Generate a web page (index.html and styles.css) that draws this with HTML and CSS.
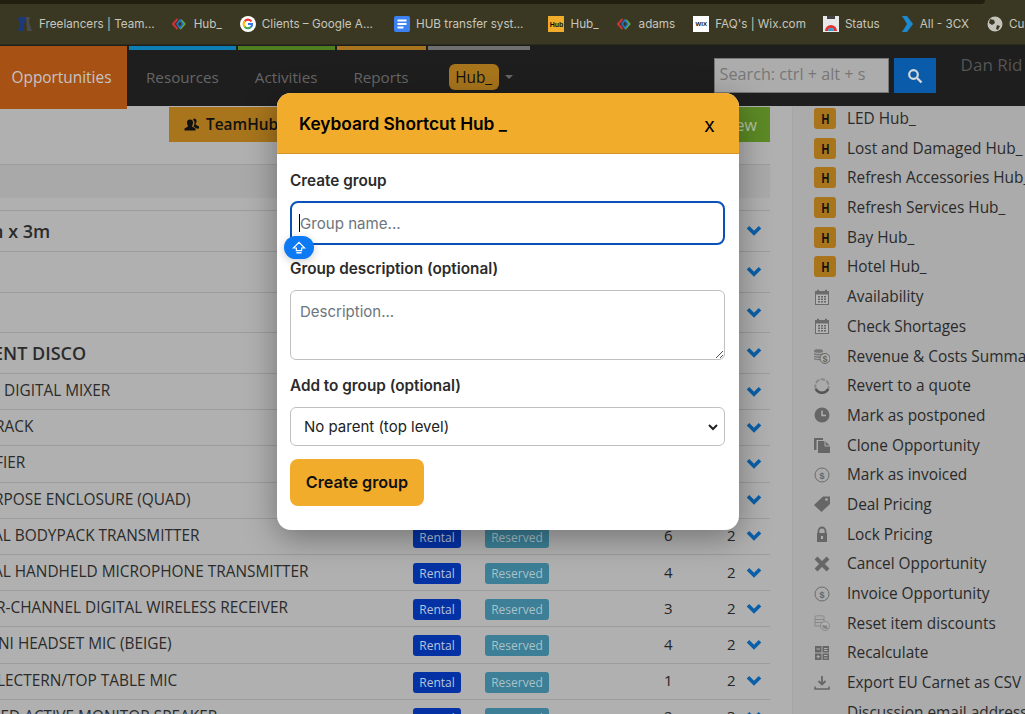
FILE: index.html
```html
<!DOCTYPE html>
<html lang="en">
<head>
<meta charset="utf-8">
<title>Keyboard Shortcut Hub</title>
<link rel="stylesheet" href="styles.css">
</head>
<body>
<svg class="defs" width="0" height="0" aria-hidden="true">
  <symbol id="chev" viewBox="0 0 16 12"><path d="M2 2.200 8 8.200l6-6" fill="none" stroke="currentColor" stroke-width="3.600"/></symbol>
  <symbol id="cal" viewBox="0 0 16 16"><path d="M1 2h2V.8h2V2h6V.8h2V2h2v14H1z" fill="#6b6b6b"/><path d="M2 5.500h12V15H2z" fill="#b4b4b4"/><path d="M4 7h2v1.500H4zM7 7h2v1.500H7zM10 7h2v1.500h-2zM4 9.500h2V11H4zM7 9.500h2V11H7zM10 9.500h2V11h-2zM4 12h2v1.500H4zM7 12h2v1.500H7zM10 12h2v1.500h-2z" fill="#666"/></symbol>
  <symbol id="coins" viewBox="0 0 16 16"><path d="M0 2.500C0 .8 9 .8 9 2.500v8.500C9 12.500 0 12.500 0 11z" fill="#777"/><path d="M0 4.500c2 1.200 7 1.200 9 0M0 7c2 1.200 7 1.200 9 0M0 9.500c2 1.200 7 1.200 9 0" fill="none" stroke="#b0b0b0"/><circle cx="11" cy="10.500" r="5" fill="#b0b0b0" stroke="#666"/><text x="11" y="13.500" class="svgt">$</text></symbol>
  <symbol id="rev" viewBox="0 0 16 16"><circle cx="8" cy="8" r="6.700" fill="none" stroke="#888" stroke-width="2" stroke-dasharray="4.500 1.500"/><path d="M1.800 11a7 7 0 0 0 12.400 0" fill="none" stroke="#555" stroke-width="2.600"/></symbol>
  <symbol id="clock" viewBox="0 0 16 16"><circle cx="8" cy="8" r="7.500" fill="#666"/><path d="M8 3.500V8.500h4" fill="none" stroke="#b0b0b0" stroke-width="1.500"/></symbol>
  <symbol id="clone" viewBox="0 0 16 16"><path d="M0 1h9v2H2.500v10H0z" fill="#666"/><path d="M4 4h7l5 5v7H4z" fill="#666"/><path d="M11 4v5h5" fill="none" stroke="#b0b0b0"/></symbol>
  <symbol id="dollar" viewBox="0 0 16 16"><circle cx="8" cy="8" r="7" fill="none" stroke="#6b6b6b"/><text x="8" y="11.500" class="svgt">$</text></symbol>
  <symbol id="tag" viewBox="0 0 16 16"><path d="M0 9 9 .5h7V8l-8.500 8z" fill="#666"/><circle cx="12.500" cy="3.500" r="1.300" fill="#b0b0b0"/></symbol>
  <symbol id="lock" viewBox="0 0 16 16"><path d="M4.500 7V5a3.500 3.500 0 0 1 7 0v2" fill="none" stroke="#666" stroke-width="1.800"/><path d="M3 7h10v9H3z" fill="#666"/><path d="M7 10h2v3H7z" fill="#b0b0b0"/></symbol>
  <symbol id="cross" viewBox="0 0 16 16"><path d="M2 2l12 12M14 2 2 14" stroke="#666" stroke-width="4"/></symbol>
  <symbol id="disc" viewBox="0 0 16 16"><path d="M1 1.500c0-1 9-1 9 0V11H1z" fill="none" stroke="#888"/><path d="M1 4.500h9M1 7.500h7" stroke="#888"/><circle cx="11" cy="11" r="4.500" fill="#b0b0b0" stroke="#888"/><text x="11" y="13.500" class="svgt small">%</text></symbol>
  <symbol id="calc" viewBox="0 0 16 16"><path d="M1 1h6.500v6.500H1zM8.500 1H15v6.500H8.500zM1 8.500h6.500V15H1zM8.500 8.500H15V15H8.500z" fill="#666"/><path d="M2.500 4h3.500M10 3.500h3.500M10 5.500h3.500M2.500 11.700h3.500M4.200 10v3.500M10 10.500h3.500M10 13h3.500" stroke="#b0b0b0"/></symbol>
  <symbol id="dl" viewBox="0 0 16 16"><path d="M8 1v8M4.500 6 8 9.500 11.500 6" fill="none" stroke="#666" stroke-width="1.800"/><path d="M1 11.500v2.500h14v-2.500" fill="none" stroke="#666" stroke-width="1.500"/></symbol>
</svg>

<header class="bookmarks">
  <div class="topstrip"></div>
  <nav class="bm-row">
    <a class="bm bm-a"><svg class="bm-ic" viewBox="0 0 16 16"><path d="M3 1h7L7 8l-1 7H1l2-7L1 3z" fill="#1c3a7a"/><path d="M9 1h4l-1 5 3 9h-5z" fill="#4a4a4a"/></svg>Freelancers | Team...</a>
    <a class="bm"><svg class="bm-ic" viewBox="0 0 16 16"><path d="M5.500 3 1 8l4.500 5" fill="none" stroke="#c33" stroke-width="2"/><path d="M8 13l4.500-5L9 4" fill="none" stroke="#6a3" stroke-width="2"/><path d="M5 8l3-4 3 4-3 4z" fill="none" stroke="#27c" stroke-width="1.500"/></svg>Hub_</a>
    <a class="bm bm-c"><svg class="bm-ic" viewBox="0 0 16 16"><circle cx="8" cy="8" r="8" fill="#fff"/><path d="M12.300 5A5 5 0 0 0 4 4.500L5.500 6A3 3 0 0 1 10.500 6z" fill="#e33"/><path d="M4 4.500a5 5 0 0 0 0 7L5.500 10a3 3 0 0 1 0-4z" fill="#fb0"/><path d="M4 11.500a5 5 0 0 0 7.500.3L10 10.500A3 3 0 0 1 5.500 10z" fill="#3a5"/><path d="M13 7H8v2h3a3 3 0 0 1-1 1.500l1.500 1.300A5 5 0 0 0 13 7z" fill="#37e"/></svg>Clients – Google A...</a>
    <a class="bm bm-long"><svg class="bm-ic" viewBox="0 0 16 16"><rect width="16" height="16" rx="2" fill="#3b82f0"/><path d="M3.500 3.500h9v2h-9zM3.500 7h9v2h-9zM3.500 10.500h6v2h-6z" fill="#fff"/></svg>HUB transfer syst...</a>
    <a class="bm"><span class="bm-hub">Hub</span>Hub_</a>
    <a class="bm"><svg class="bm-ic" viewBox="0 0 16 16"><path d="M5.500 3 1 8l4.500 5" fill="none" stroke="#c33" stroke-width="2"/><path d="M8 13l4.500-5L9 4" fill="none" stroke="#6a3" stroke-width="2"/><path d="M5 8l3-4 3 4-3 4z" fill="none" stroke="#27c" stroke-width="1.500"/></svg>adams</a>
    <a class="bm bm-a"><span class="bm-wix">WIX</span>FAQ's | Wix.com</a>
    <a class="bm"><svg class="bm-ic" viewBox="0 0 16 16"><rect width="16" height="16" fill="#e8e8e8"/><rect x="4" y="0" width="8" height="3" fill="#444"/><path d="M2 15a6 6 0 0 1 12 0h-3a3 3 0 0 0-6 0z" fill="#d33"/><path d="M5 15a3 3 0 0 1 6 0z" fill="#39c"/></svg>Status</a>
    <a class="bm"><svg class="bm-ic" viewBox="0 0 16 16"><path d="M4 0h5l6 8-6 8H4l5-8z" fill="#1c8ad0"/></svg>All - 3CX</a>
    <a class="bm"><svg class="bm-ic" viewBox="0 0 16 16"><circle cx="8" cy="8" r="7.500" fill="#c4c4bc"/><path d="M3 3l4 1 1 3-3 2-3-2zM10 9l3 1-2 4-2-1z" fill="#3a3823"/></svg>Cu</a>
  </nav>
</header>

<div class="navbar">
  <div class="strips">
    <i class="strip s1"></i><i class="strip s2"></i><i class="strip s3"></i><i class="strip s4"></i>
  </div>
  <a class="tab-active">Opportunities</a>
  <div class="nav-links">
    <a>Resources</a><a>Activities</a><a>Reports</a>
  </div>
  <span class="nav-hub">Hub_</span><span class="nav-caret"></span>
  <div class="search">
    <span class="search-input">Search: ctrl + alt + s</span>
    <span class="search-btn"><svg viewBox="0 0 16 16" width="16" height="16"><circle cx="6.500" cy="6.500" r="4.300" fill="none" stroke="#d8d8d8" stroke-width="2.200"/><path d="m10 10 4.500 4.500" stroke="#d8d8d8" stroke-width="2.400"/></svg></span>
  </div>
  <span class="nav-user">Dan Rid</span>
</div>

<div class="content">
  <main class="left">
    <div class="toolbar">
      <span class="btn-team"><svg viewBox="0 0 16 16" width="16" height="16"><path d="M6 2.500a3 3 0 0 1 3 3c0 2-1 3-1 4l3.500 2v2H.5v-2L4 9.500c0-1-1-1.500-1-4a3 3 0 0 1 3-3z" fill="#111"/><path d="M10 1.500a2.500 2.500 0 0 1 2.500 2.500c0 2-1 3-1 3.500l3.500 2v2h-2.500L9.500 9.500c.5-1 1-2 1-4 0-1-.5-2-1.500-3z" fill="#111"/></svg>TeamHub</span>
      <span class="btn-green">ew</span>
    </div>
    <div class="band"></div>
    <div class="row tall"><span class="name bold clip-b">3m x 3m</span><svg class="chev"><use href="#chev"/></svg></div>
    <div class="row tall"><span class="name"></span><svg class="chev"><use href="#chev"/></svg></div>
    <div class="row tall short"><span class="name"></span><svg class="chev"><use href="#chev"/></svg></div>
    <div class="row tall"><span class="name bold clip-c">ENT DISCO</span><svg class="chev"><use href="#chev"/></svg></div>
    <div class="row"><span class="name lead">DIGITAL MIXER</span><svg class="chev"><use href="#chev"/></svg></div>
    <div class="row"><span class="name i5">RACK</span><svg class="chev"><use href="#chev"/></svg></div>
    <div class="row"><span class="name i5">FIER</span><svg class="chev"><use href="#chev"/></svg></div>
    <div class="row"><span class="name i6">RPOSE ENCLOSURE (QUAD)</span><svg class="chev"><use href="#chev"/></svg></div>
    <div class="row"><span class="name i7">AL BODYPACK TRANSMITTER</span><span class="badge rental">Rental</span><span class="badge reserved">Reserved</span><span class="qty">6</span><span class="qty2">2</span><svg class="chev"><use href="#chev"/></svg></div>
    <div class="row"><span class="name i7">AL HANDHELD MICROPHONE TRANSMITTER</span><span class="badge rental">Rental</span><span class="badge reserved">Reserved</span><span class="qty">4</span><span class="qty2">2</span><svg class="chev"><use href="#chev"/></svg></div>
    <div class="row"><span class="name i4">R-CHANNEL DIGITAL WIRELESS RECEIVER</span><span class="badge rental">Rental</span><span class="badge reserved">Reserved</span><span class="qty">3</span><span class="qty2">2</span><svg class="chev"><use href="#chev"/></svg></div>
    <div class="row"><span class="name i2">NI HEADSET MIC (BEIGE)</span><span class="badge rental">Rental</span><span class="badge reserved">Reserved</span><span class="qty">4</span><span class="qty2">2</span><svg class="chev"><use href="#chev"/></svg></div>
    <div class="row"><span class="name i3">LECTERN/TOP TABLE MIC</span><span class="badge rental">Rental</span><span class="badge reserved">Reserved</span><span class="qty">1</span><span class="qty2">2</span><svg class="chev"><use href="#chev"/></svg></div>
    <div class="row"><span class="name i8">SED ACTIVE MONITOR SPEAKER</span><span class="badge rental">Rental</span><span class="badge reserved">Reserved</span><span class="qty">2</span><span class="qty2">3</span><svg class="chev"><use href="#chev"/></svg></div>
  </main>

  <aside class="side">
    <a class="si"><b class="h"><i>H</i></b>LED Hub_</a>
    <a class="si"><b class="h"><i>H</i></b>Lost and Damaged Hub_</a>
    <a class="si"><b class="h"><i>H</i></b>Refresh Accessories Hub_</a>
    <a class="si"><b class="h"><i>H</i></b>Refresh Services Hub_</a>
    <a class="si"><b class="h"><i>H</i></b>Bay Hub_</a>
    <a class="si"><b class="h"><i>H</i></b>Hotel Hub_</a>
    <a class="si"><svg class="ic"><use href="#cal"/></svg>Availability</a>
    <a class="si"><svg class="ic"><use href="#cal"/></svg>Check Shortages</a>
    <a class="si"><svg class="ic"><use href="#coins"/></svg>Revenue &amp; Costs Summary</a>
    <a class="si"><svg class="ic"><use href="#rev"/></svg>Revert to a quote</a>
    <a class="si"><svg class="ic"><use href="#clock"/></svg>Mark as postponed</a>
    <a class="si"><svg class="ic"><use href="#clone"/></svg>Clone Opportunity</a>
    <a class="si"><svg class="ic"><use href="#dollar"/></svg>Mark as invoiced</a>
    <a class="si"><svg class="ic"><use href="#tag"/></svg>Deal Pricing</a>
    <a class="si"><svg class="ic"><use href="#lock"/></svg>Lock Pricing</a>
    <a class="si"><svg class="ic"><use href="#cross"/></svg>Cancel Opportunity</a>
    <a class="si"><svg class="ic"><use href="#dollar"/></svg>Invoice Opportunity</a>
    <a class="si"><svg class="ic"><use href="#disc"/></svg>Reset item discounts</a>
    <a class="si"><svg class="ic"><use href="#calc"/></svg>Recalculate</a>
    <a class="si"><svg class="ic"><use href="#dl"/></svg>Export EU Carnet as CSV</a>
    <a class="si"><span class="ic"></span>Discussion email address</a>
  </aside>
</div>

<section class="modal">
  <div class="modal-head"><h2>Keyboard Shortcut Hub _</h2><span class="close">x</span></div>
  <form class="modal-body">
    <h3 class="lbl">Create group</h3>
    <div class="fake-input focus"><i class="caret"></i>Group name...</div>
    <span class="pill"><svg viewBox="0 0 16 16" width="14" height="14"><path d="M8 1.500 14.500 8H11v3H5V8H1.500z" fill="none" stroke="#fff" stroke-width="1.400"/><path d="M5 13.500h6" stroke="#fff" stroke-width="1.600"/></svg></span>
    <label class="lbl second">Group description (optional)</label>
    <div class="fake-area">Description...<svg class="grip" viewBox="0 0 8 8" width="8" height="8"><path d="M8 1 1 8M8 5 5 8" stroke="#555"/></svg></div>
    <label class="lbl third">Add to group (optional)</label>
    <div class="fake-select">No parent (top level)<svg viewBox="0 0 12 12" width="12" height="12"><path d="m2 4 4 4 4-4" fill="none" stroke="#222" stroke-width="2"/></svg></div>
    <span class="submit">Create group</span>
  </form>
</section>
</body>
</html>
```
FILE: styles.css
```css
* { box-sizing: border-box; }
html, body { margin: 0; height: 714px; overflow: hidden; }
body { background: #b0b0b0; font-family: "Open Sans", sans-serif; color: #262626; position: relative; }
.defs { position: absolute; }
.svgt { font: 700 9px "Liberation Sans", sans-serif; fill: #666; text-anchor: middle; }
.svgt.small { font-size: 6px; }

.bookmarks { height: 45px; background: #3a3823; border-bottom: 1px solid #2e2c1c; }
.topstrip { height: 4px; width: 985px; background: #231f10; border-bottom-right-radius: 4px; }
.bm-row { display: flex; align-items: center; height: 40px; padding: 0 0 0 17px; gap: 18px; white-space: nowrap; overflow: hidden; }
.bm { display: flex; align-items: center; gap: 6px; font: 11.700px Inter, sans-serif; color: #c6c6bc; }
.bm-a { margin-right: -1px; }
.bm-c { margin-right: 3px; }
.bm-long { margin-right: 7px; }
.bm-ic { width: 16px; height: 16px; flex: none; }
.bm-hub { width: 16px; height: 16px; background: #f2ac2b; color: #111; font: 700 7px "Liberation Sans", sans-serif; display: flex; align-items: center; justify-content: center; }
.bm-wix { width: 16px; height: 16px; background: #fff; color: #111; font: 700 6px "Liberation Sans", sans-serif; display: flex; align-items: center; justify-content: center; }

.navbar { height: 61px; background: #1e1e1e; display: flex; align-items: flex-start; position: relative; }
.strips { position: absolute; left: 129px; top: 1px; display: flex; gap: 2px; }
.strip { height: 4px; display: block; }
.s1 { width: 107px; background: #0e7fb5; }
.s2 { width: 97px; background: #4f7f20; }
.s3 { width: 89px; background: #a8741e; }
.s4 { width: 102px; background: #6f6f6f; }
.tab-active { width: 127px; height: 63px; margin-top: 1px; padding-right: 4px; background: #a85114; color: #c4c4c4; font-size: 15.400px; display: flex; align-items: center; justify-content: center; flex: none; position: relative; z-index: 1; }
.nav-links { display: flex; gap: 36px; margin: 21px 0 0 19px; color: #666; font-size: 15.200px; line-height: 22px; }
.nav-hub { margin: 19px 0 0 40px; width: 50px; height: 26px; border-radius: 6px; background: #a8751c; color: #111; font-size: 15.400px; display: flex; align-items: center; justify-content: center; flex: none; }
.nav-caret { margin: 30px 0 0 6px; border: 4px solid transparent; border-top-color: #666; border-bottom: 0; }
.search { display: flex; gap: 5px; margin: 13px 0 0 201px; }
.search-input { width: 175px; height: 35px; background: #acacac; border: 1px solid #777; color: #777; font-size: 16.200px; line-height: 31px; padding-left: 5px; white-space: nowrap; }
.search-btn { width: 42px; height: 35px; background: #0a5cab; display: flex; align-items: center; justify-content: center; }
.nav-user { margin: 8px 0 0 25px; font-size: 17px; color: #555; white-space: nowrap; }

.content { display: flex; align-items: flex-start; height: 608px; overflow: hidden; }
.left { width: 770px; flex: none; overflow: hidden; }
.toolbar { height: 59px; display: flex; justify-content: space-between; padding: 1px 0 0 169px; border-bottom: 1px solid #9c9c9c; }
.btn-team { width: 130px; height: 35px; background: #a8751c; color: #111; display: flex; align-items: center; gap: 6px; padding-left: 15px; font-size: 15.400px; font-weight: 600; }
.btn-green { width: 31px; height: 35px; background: #5c8a25; color: #b8c4a8; font-size: 16px; display: flex; align-items: center; justify-content: flex-end; padding-right: 13px; }
.band { height: 46px; border-bottom: 1px solid #9c9c9c; background: linear-gradient(#a9a9a9 33px, #b0b0b0 33px); }
.row { height: 36.200px; display: flex; align-items: center; border-bottom: 1px solid #9c9c9c; position: relative; padding-right: 8px; white-space: nowrap; }
.tall { height: 41px; }
.short { height: 40px; }
.name { flex: 1; font-size: 15.400px; overflow: hidden; color: #2b2b2b; margin-bottom: 2px; }
.tall .name { margin-bottom: 0; }
.lead { padding-left: 4px; margin-bottom: 3px; }
.bold { font-size: 18px; font-weight: 600; }
.i2 { text-indent: -2px; }
.i3 { text-indent: -3px; }
.i4 { text-indent: -4px; }
.i5 { text-indent: -5px; }
.i6 { text-indent: -6px; }
.i7 { text-indent: -7px; }
.i8 { text-indent: -8px; }
.clip-b { text-indent: -24px; }
.clip-c { text-indent: -7px; }
.chev { width: 16px; height: 12px; color: #0a5fa8; flex: none; }
.badge { position: absolute; top: 8px; height: 21px; border-radius: 3px; font-size: 12px; display: flex; align-items: center; justify-content: center; }
.rental { left: 413px; width: 48px; background: #0432a4; color: #b9c4dc; }
.reserved { left: 485px; width: 64px; background: #3c7f96; color: #a9c2cb; }
.qty, .qty2 { position: absolute; font-size: 15px; margin-bottom: 2px; }
.qty { left: 664px; }
.qty2 { left: 727px; }

.side { margin-left: 22px; flex: 1; height: 608px; background: #ababab; border-left: 1px solid #a6a6a6; overflow: hidden; }
.si { display: flex; align-items: center; height: 29.700px; padding-left: 21px; font-size: 15.400px; color: #2a2a2a; white-space: nowrap; }
.si:first-child { margin-top: -2.300px; }
.h { width: 22px; height: 21px; background: #a8751c; border-radius: 3px; color: #111; font: 700 15px "Liberation Sans", sans-serif; display: flex; align-items: center; justify-content: center; margin-right: 11px; flex: none; }
.h i { display: block; font-style: normal; transform: scaleX(.72); }
.ic { width: 16px; height: 16px; margin-right: 17px; flex: none; }

.modal { position: absolute; left: 277px; top: 93px; width: 462px; height: 437px; background: #fff; border-radius: 14px; box-shadow: 0 8px 32px rgba(0,0,0,.35); font-family: Inter, sans-serif; }
.modal-head { height: 61px; background: #f2ac2b; border-bottom: 1px solid #d4962a; border-radius: 14px 14px 0 0; display: flex; align-items: center; justify-content: space-between; padding: 0 24px 0 22px; }
.modal-head h2 { margin: 0; font-size: 17.300px; font-weight: 600; color: #000; }
.close { font-size: 20px; color: #000; padding-top: 4px; }
.modal-body { padding: 17px 14px 0 13px; position: relative; }
.lbl { display: block; margin: 0; font-size: 15.300px; line-height: 19px; font-weight: 600; color: #2b2b2b; }
.fake-input { margin-top: 11px; height: 44px; border: 2px solid #0a52b8; border-radius: 8px; font-size: 15.100px; line-height: 42px; padding-left: 8px; color: #6c757d; position: relative; }
.caret { width: 1px; height: 18px; background: #000; position: absolute; left: 7px; top: 11px; }
.pill { position: absolute; left: 7px; top: 82px; width: 30px; height: 23px; border-radius: 12px; background: #0d79f2; box-shadow: 0 2px 8px rgba(0,0,0,.2); display: flex; align-items: center; justify-content: center; }
.second { margin-top: 14px; }
.fake-area { margin-top: 12px; height: 70px; border: 1px solid #c0c0c0; border-radius: 6px; font-size: 15px; line-height: 20px; padding: 11px 9px; color: #6c757d; position: relative; }
.grip { position: absolute; right: 1px; bottom: 1px; }
.third { margin-top: 16px; }
.fake-select { margin-top: 12px; height: 39px; border: 1px solid #c0c0c0; border-radius: 6px; font-size: 15px; padding: 0 5px 0 13px; color: #222; display: flex; align-items: center; justify-content: space-between; }
.submit { display: flex; align-items: center; justify-content: center; margin-top: 13px; padding-bottom: 2px; width: 134px; height: 47px; border-radius: 8px; background: #f2ac2b; color: #111; font-size: 16.200px; font-weight: 600; }
```
